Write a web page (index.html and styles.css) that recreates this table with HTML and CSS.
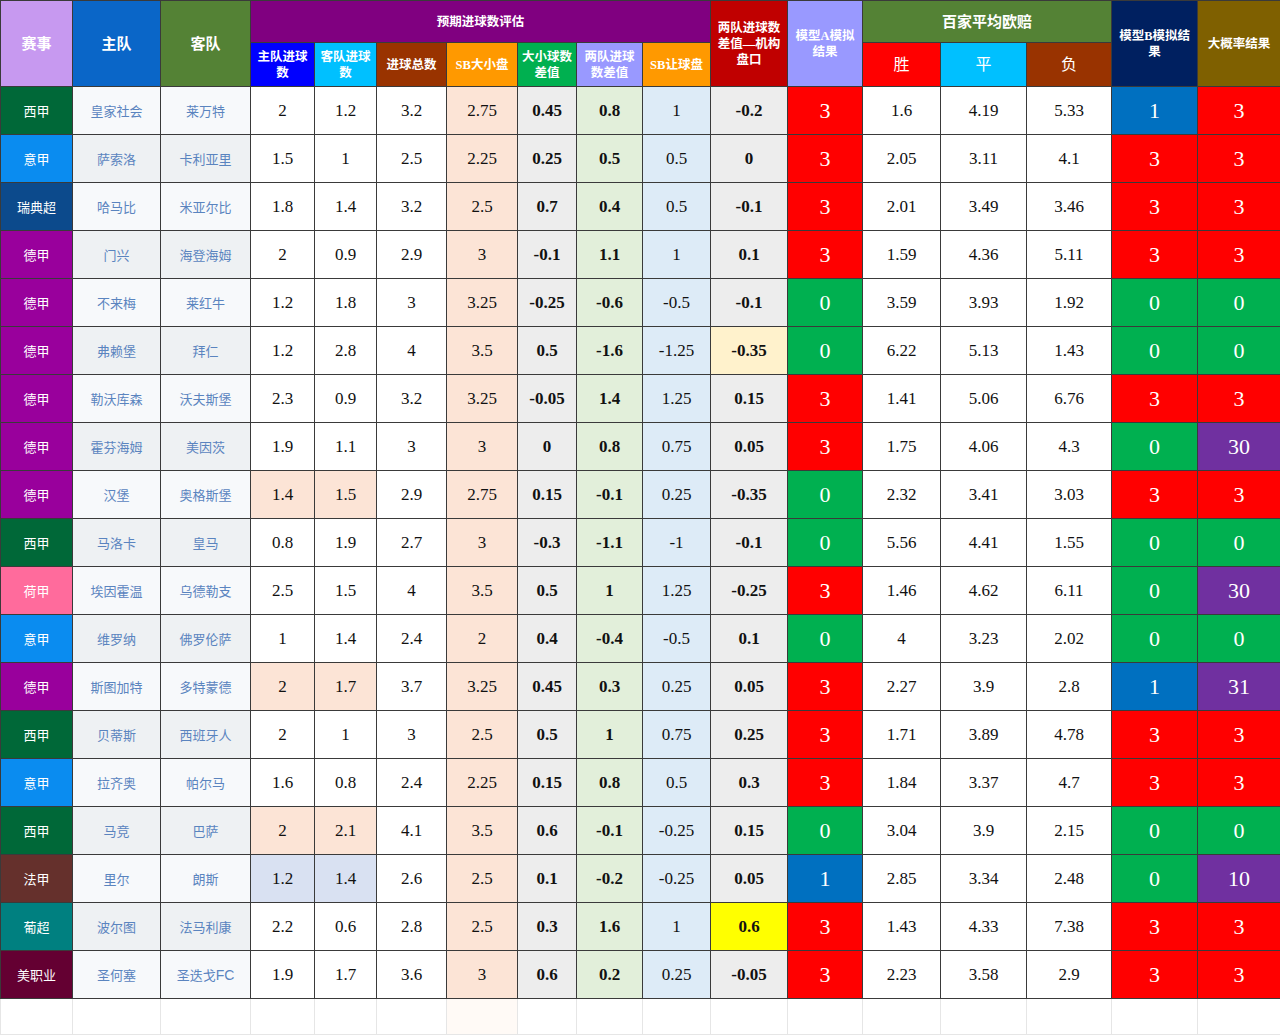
FILE: index.html
```html
<!DOCTYPE html>
<html lang="zh">
<head>
<meta charset="utf-8">
<title>预期进球数评估</title>
<link rel="stylesheet" href="styles.css">
</head>
<body>
<table class="sheet">
  <colgroup>
    <col class="w72"><col class="w88"><col class="w90">
    <col class="w64"><col class="w62"><col class="w70"><col class="w71">
    <col class="w59"><col class="w66"><col class="w68">
    <col class="w77"><col class="w75">
    <col class="w78"><col class="w86"><col class="w85">
    <col class="w86"><col class="w83">
  </colgroup>
  <thead>
    <tr class="h1">
      <th rowspan="2" class="h-league big">赛事</th>
      <th rowspan="2" class="h-home big">主队</th>
      <th rowspan="2" class="h-away big">客队</th>
      <th colspan="7" class="h-exp">预期进球数评估</th>
      <th rowspan="2" class="h-diff">两队进球数<br>差值—机构<br>盘口</th>
      <th rowspan="2" class="h-ma">模型A模拟<br>结果</th>
      <th colspan="3" class="h-odds big">百家平均欧赔</th>
      <th rowspan="2" class="h-mb">模型B模拟结<br>果</th>
      <th rowspan="2" class="h-prob">大概率结果</th>
    </tr>
    <tr class="h2">
      <th class="c-blue">主队进球<br>数</th>
      <th class="c-cyan">客队进球<br>数</th>
      <th class="c-brown">进球总数</th>
      <th class="c-orange">SB大小盘</th>
      <th class="c-green">大小球数<br>差值</th>
      <th class="c-lav">两队进球<br>数差值</th>
      <th class="c-orange">SB让球盘</th>
      <th class="c-red big2">胜</th>
      <th class="c-cyan big2">平</th>
      <th class="c-brown big2">负</th>
    </tr>
  </thead>
  <tbody id="body"></tbody>
  <tfoot>
    <tr class="blank">
      <td></td><td></td><td></td><td></td><td></td><td></td><td class="bp"></td><td></td><td></td><td></td><td></td><td></td><td></td><td></td><td></td><td></td><td></td>
    </tr>
  </tfoot>
</table>
<script src="app.js"></script>
</body>
</html>
```

FILE: app.js
```js
const rows = [
  ["西甲","xj","皇家社会","莱万特","2","1.2","3.2","2.75","0.45","0.8","1","-0.2","3","1.6","4.19","5.33","1","3","",""],
  ["意甲","yj","萨索洛","卡利亚里","1.5","1","2.5","2.25","0.25","0.5","0.5","0","3","2.05","3.11","4.1","3","3","",""],
  ["瑞典超","rd","哈马比","米亚尔比","1.8","1.4","3.2","2.5","0.7","0.4","0.5","-0.1","3","2.01","3.49","3.46","3","3","",""],
  ["德甲","dj","门兴","海登海姆","2","0.9","2.9","3","-0.1","1.1","1","0.1","3","1.59","4.36","5.11","3","3","",""],
  ["德甲","dj","不来梅","莱红牛","1.2","1.8","3","3.25","-0.25","-0.6","-0.5","-0.1","0","3.59","3.93","1.92","0","0","",""],
  ["德甲","dj","弗赖堡","拜仁","1.2","2.8","4","3.5","0.5","-1.6","-1.25","-0.35","0","6.22","5.13","1.43","0","0","","pale"],
  ["德甲","dj","勒沃库森","沃夫斯堡","2.3","0.9","3.2","3.25","-0.05","1.4","1.25","0.15","3","1.41","5.06","6.76","3","3","",""],
  ["德甲","dj","霍芬海姆","美因茨","1.9","1.1","3","3","0","0.8","0.75","0.05","3","1.75","4.06","4.3","0","30","",""],
  ["德甲","dj","汉堡","奥格斯堡","1.4","1.5","2.9","2.75","0.15","-0.1","0.25","-0.35","0","2.32","3.41","3.03","3","3","peach",""],
  ["西甲","xj","马洛卡","皇马","0.8","1.9","2.7","3","-0.3","-1.1","-1","-0.1","0","5.56","4.41","1.55","0","0","",""],
  ["荷甲","hj","埃因霍温","乌德勒支","2.5","1.5","4","3.5","0.5","1","1.25","-0.25","3","1.46","4.62","6.11","0","30","",""],
  ["意甲","yj","维罗纳","佛罗伦萨","1","1.4","2.4","2","0.4","-0.4","-0.5","0.1","0","4","3.23","2.02","0","0","",""],
  ["德甲","dj","斯图加特","多特蒙德","2","1.7","3.7","3.25","0.45","0.3","0.25","0.05","3","2.27","3.9","2.8","1","31","peach",""],
  ["西甲","xj","贝蒂斯","西班牙人","2","1","3","2.5","0.5","1","0.75","0.25","3","1.71","3.89","4.78","3","3","",""],
  ["意甲","yj","拉齐奥","帕尔马","1.6","0.8","2.4","2.25","0.15","0.8","0.5","0.3","3","1.84","3.37","4.7","3","3","",""],
  ["西甲","xj","马竞","巴萨","2","2.1","4.1","3.5","0.6","-0.1","-0.25","0.15","0","3.04","3.9","2.15","0","0","peach",""],
  ["法甲","fj","里尔","朗斯","1.2","1.4","2.6","2.5","0.1","-0.2","-0.25","0.05","1","2.85","3.34","2.48","0","10","bluish",""],
  ["葡超","pc","波尔图","法马利康","2.2","0.6","2.8","2.5","0.3","1.6","1","0.6","3","1.43","4.33","7.38","3","3","","yellow"],
  ["美职业","mz","圣何塞","圣迭戈<span class=\"lat\">FC</span>","1.9","1.7","3.6","3","0.6","0.2","0.25","-0.05","3","2.23","3.58","2.9","3","3","",""]
];
function res(v){
  if (v === "3") return "r-red";
  if (v === "0") return "r-green";
  if (v === "1") return "r-blue";
  return "r-purple";
}
const body = document.getElementById("body");
let html = "";
rows.forEach((r, i) => {
  const alt = i % 2 === 1 ? "alt" : "";
  const hl = r[18] ? r[18] : "";
  const dc = r[19] ? r[19] : "";
  html += `<tr class="${alt}">
    <td class="lg lg-${r[1]}">${r[0]}</td>
    <td class="team">${r[2]}</td>
    <td class="team">${r[3]}</td>
    <td class="num ${hl}">${r[4]}</td>
    <td class="num ${hl}">${r[5]}</td>
    <td class="num">${r[6]}</td>
    <td class="num sb">${r[7]}</td>
    <td class="num bold gray">${r[8]}</td>
    <td class="num bold grn">${r[9]}</td>
    <td class="num sky">${r[10]}</td>
    <td class="num bold gray ${dc}">${r[11]}</td>
    <td class="res ${res(r[12])}">${r[12]}</td>
    <td class="num odd">${r[13]}</td>
    <td class="num odd">${r[14]}</td>
    <td class="num odd">${r[15]}</td>
    <td class="res ${res(r[16])}">${r[16]}</td>
    <td class="res ${res(r[17])}">${r[17]}</td>
  </tr>`;
});
body.innerHTML = html;
```

FILE: styles.css
```css
html, body {
  margin: 0;
  padding: 0;
  background: #ffffff;
}
.sheet {
  width: 1280px;
  table-layout: fixed;
  border-collapse: collapse;
  font-family: "Liberation Serif", "Noto Sans CJK SC", serif;
}
.w59 { width: 59px; }
.w62 { width: 62px; }
.w64 { width: 64px; }
.w66 { width: 66px; }
.w68 { width: 68px; }
.w70 { width: 70px; }
.w71 { width: 71px; }
.w72 { width: 72px; }
.w75 { width: 75px; }
.w77 { width: 77px; }
.w78 { width: 78px; }
.w83 { width: 83px; }
.w85 { width: 85px; }
.w86 { width: 86px; }
.w88 { width: 88px; }
.w90 { width: 90px; }

.sheet th, .sheet td {
  border: 1px solid #3a3a3a;
  padding: 0;
  text-align: center;
  vertical-align: middle;
  overflow: hidden;
}
.sheet th {
  color: #ffffff;
  font-weight: bold;
  font-size: 12.5px;
  line-height: 16px;
  font-family: "Liberation Serif", "Noto Sans CJK SC", serif;
}
.sheet th.big { font-size: 15px; }
.sheet th.big2 { font-size: 16px; font-weight: normal; }
.h1 { height: 42px; }
.h2 { height: 44px; }

.h-league { background: #c799f0; }
.h-home { background: #0a66c8; }
.h-away { background: #548235; }
.h-exp { background: #800080; }
.h-diff { background: #c00000; }
.h-ma { background: #9999ff; }
.h-odds { background: #548235; }
.h-mb { background: #002060; }
.h-prob { background: #7f6000; }
.c-blue { background: #0000ff; }
.c-cyan { background: #00c0ff; }
.c-brown { background: #993300; }
.c-orange { background: #ff9900; }
.c-green { background: #00b050; }
.c-lav { background: #9999ff; }
.c-red { background: #ff0000; }

tbody tr { height: 48px; }
.lg {
  color: #ffffff;
  font-size: 13px;
  font-family: "Noto Sans CJK SC", sans-serif;
}
.lg-xj { background: #006838; }
.lg-yj { background: #0a8cf0; }
.lg-rd { background: #0c4a8c; }
.lg-dj { background: #99009c; }
.lg-hj { background: #ff6b9c; }
.lg-fj { background: #65302c; }
.lg-pc { background: #008080; }
.lg-mz { background: #640032; }

.team {
  color: #5a84bf;
  font-size: 13px;
  background: #f7f9fb;
  font-family: "Noto Sans CJK SC", sans-serif;
}
tr.alt .team { background: #eef1f3; }
.lat { font-family: "Liberation Sans", sans-serif; font-size: 14px; }

.num {
  color: #111111;
  font-size: 17px;
  background: #ffffff;
}
.num.bold { font-weight: bold; }
.sb { background: #fce4d6; }
.gray { background: #ededed; }
.grn { background: #e2efda; }
.sky { background: #ddebf7; }
.num.peach { background: #fce4d6; }
.num.bluish { background: #d9e1f2; }
.num.pale { background: #fff2cc; }
.num.yellow { background: #ffff00; }

.res {
  color: #ffffff;
  font-size: 22px;
}
.r-red { background: #ff0000; }
.r-green { background: #00b050; }
.r-blue { background: #0070c0; }
.r-purple { background: #7030a0; }

.blank { height: 36px; }
.sheet .blank td {
  border: 1px solid #e6e6e6;
  border-top: 1px solid #3a3a3a;
  background: #ffffff;
}
.sheet .blank td.bp { background: #fffaf6; }
```
